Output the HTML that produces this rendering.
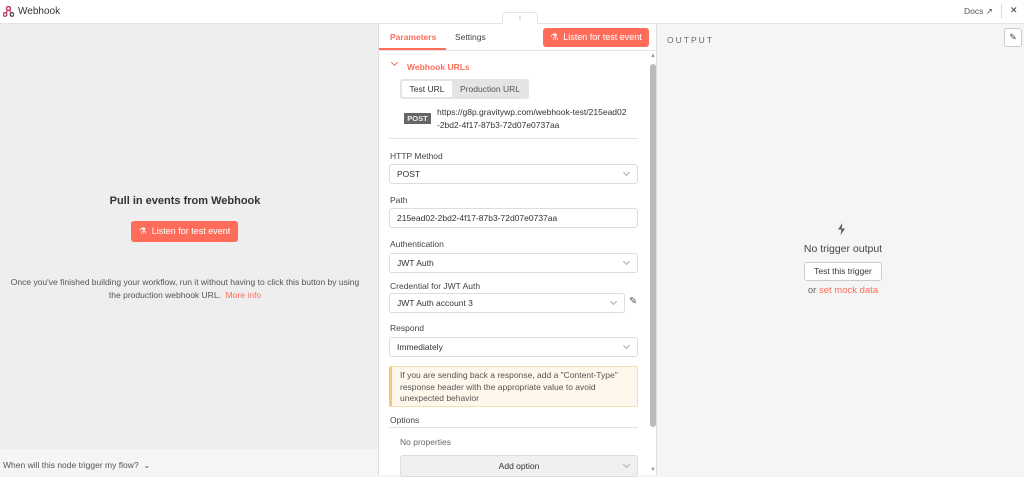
<!DOCTYPE html>
<html><head><style>
*{box-sizing:border-box;margin:0;padding:0}
body{width:1024px;height:475px;overflow:hidden;font-family:"Liberation Sans",sans-serif;background:#f5f5f5;position:relative;color:#333}
.abs{position:absolute}
.top{left:0;top:0;width:1024px;height:24px;background:#fff;border-bottom:1px solid #e4e4e4}
.left{left:0;top:24px;width:378px;height:451px;background:#eeeeee}
.right{left:657px;top:24px;width:367px;height:451px;background:#f5f5f5}
.mid{left:378px;top:24px;width:279px;height:451px;background:#fff;border-left:1px solid #ddd;border-right:1px solid #ddd}
.btn{background:#ff6d5a;color:#fff;border-radius:3px;font-size:9px;display:flex;align-items:center;justify-content:center}
.lbl{font-size:8.5px;color:#444;left:11px}
.inp{left:10px;width:249px;height:20px;border:1px solid #ddd;border-radius:3px;font-size:8.5px;color:#333;padding-left:7px;line-height:18px}
.chev{position:absolute;right:8px;top:5px;width:5px;height:5px;border-right:1px solid #aaa;border-bottom:1px solid #aaa;transform:rotate(45deg)}
</style></head><body>
<div class="abs top">
 <svg class="abs" style="left:3px;top:6px" width="11" height="11" viewBox="0 0 11 11"><circle cx="5.5" cy="2.5" r="2" fill="none" stroke="#c0365c" stroke-width="1.4"/><circle cx="2" cy="8.5" r="1.8" fill="none" stroke="#c0365c" stroke-width="1.4"/><circle cx="9" cy="8.5" r="1.8" fill="none" stroke="#555" stroke-width="1.4"/><path d="M4.8 4.2L2.8 7M6.5 4L8.3 7" stroke="#c0365c" stroke-width="1.2"/></svg>
 <div class="abs" style="left:18px;top:6px;font-size:10px;color:#333">Webhook</div>
 <div class="abs" style="left:964px;top:6px;font-size:8.5px;color:#555">Docs ↗</div>
 <div class="abs" style="left:1001px;top:4px;width:1px;height:15px;background:#ddd"></div>
 <div class="abs" style="left:1010px;top:5px;font-size:9px;color:#333">✕</div>
</div>
<div class="abs" style="left:502px;top:12px;width:36px;height:13px;background:#fff;border:1px solid #e4e4e4;border-bottom:none;border-radius:3px 3px 0 0;font-size:6px;color:#ccc;text-align:center;line-height:13px">⦀</div>
<div class="abs left">
 <div class="abs" style="left:0;top:171px;width:370px;text-align:center;font-size:11px;font-weight:bold;color:#333">Pull in events from Webhook</div>
 <div class="abs btn" style="left:131px;top:197px;width:107px;height:21px">⚗&nbsp; Listen for test event</div>
 <div class="abs" style="left:0;top:252px;width:370px;text-align:center;font-size:8.5px;color:#555;line-height:13px">Once you've finished building your workflow, run it without having to click this button by using<br>the production webhook URL. <span style="color:#ff6d5a">&nbsp;More info</span></div>
 <div class="abs" style="left:0;top:425px;width:378px;height:26px;background:#f5f5f5;font-size:8.5px;color:#555;padding:11px 0 0 3px">When will this node trigger my flow? &nbsp;⌄</div>
</div>
<div class="abs mid">
 <div class="abs" style="left:0;top:0;width:277px;height:27px;border-bottom:1px solid #e4e4e4"></div>
 <div class="abs" style="left:11px;top:8px;font-size:8.5px;color:#ff6d5a;font-weight:bold">Parameters</div>
 <div class="abs" style="left:0;top:24px;width:67px;height:2px;background:#ff6d5a"></div>
 <div class="abs" style="left:76px;top:8px;font-size:8.5px;color:#444">Settings</div>
 <div class="abs btn" style="left:164px;top:4px;width:106px;height:19px">⚗&nbsp; Listen for test event</div>
 <div class="abs" style="left:271px;top:40px;width:6px;height:363px;background:#bbb;border-radius:3px"></div>
 <div class="abs" style="left:271px;top:29px;font-size:6px;color:#999">▲</div>
 <div class="abs" style="left:271px;top:443px;font-size:6px;color:#999">▼</div>
 <div class="abs" style="left:13px;top:36px;width:5px;height:5px;border-right:1.5px solid #ff6d5a;border-bottom:1.5px solid #ff6d5a;transform:rotate(45deg)"></div>
 <div class="abs" style="left:28px;top:38px;font-size:8.5px;color:#ff6d5a;font-weight:bold">Webhook URLs</div>
 <div class="abs" style="left:21px;top:55px;width:129px;height:20px;background:#e4e4e4;border-radius:3px"></div>
 <div class="abs" style="left:23px;top:57px;width:50px;height:16px;background:#fff;border-radius:2px;font-size:8.5px;text-align:center;line-height:16px">Test URL</div>
 <div class="abs" style="left:81px;top:57px;font-size:8.5px;color:#555;line-height:16px">Production URL</div>
 <div class="abs" style="left:25px;top:89px;width:27px;height:11px;background:#666;color:#eee;font-size:7.5px;font-weight:bold;text-align:center;line-height:11px">POST</div>
 <div class="abs" style="left:58px;top:82px;font-size:8.5px;color:#333;line-height:13px">https://g8p.gravitywp.com/webhook-test/215ead02<br>-2bd2-4f17-87b3-72d07e0737aa</div>
 <div class="abs" style="left:10px;top:114px;width:249px;height:1px;background:#e4e4e4"></div>
 <div class="abs lbl" style="top:127px">HTTP Method</div>
 <div class="abs inp" style="top:140px">POST<span class="chev"></span></div>
 <div class="abs lbl" style="top:171px">Path</div>
 <div class="abs inp" style="top:184px">215ead02-2bd2-4f17-87b3-72d07e0737aa</div>
 <div class="abs lbl" style="top:215px">Authentication</div>
 <div class="abs inp" style="top:229px">JWT Auth<span class="chev"></span></div>
 <div class="abs lbl" style="top:257px">Credential for JWT Auth</div>
 <div class="abs inp" style="top:269px;width:236px">JWT Auth account 3<span class="chev"></span></div>
 <div class="abs" style="left:250px;top:272px;font-size:10px;color:#555">✎</div>
 <div class="abs lbl" style="top:299px">Respond</div>
 <div class="abs inp" style="top:313px">Immediately<span class="chev"></span></div>
 <div class="abs" style="left:10px;top:342px;width:249px;height:41px;background:#fef7ec;border:1px solid #f5dfb5;border-left:3px solid #f6c57a;border-radius:2px;font-size:8.5px;color:#555;line-height:11.5px;padding:3px 0 0 8px">If you are sending back a response, add a "Content-Type"<br>response header with the appropriate value to avoid<br>unexpected behavior</div>
 <div class="abs lbl" style="top:391px">Options</div>
 <div class="abs" style="left:10px;top:403px;width:249px;height:1px;background:#e4e4e4"></div>
 <div class="abs" style="left:21px;top:413px;font-size:8.5px;color:#666">No properties</div>
 <div class="abs" style="left:21px;top:431px;width:238px;height:22px;background:#f0f0f0;border:1px solid #ddd;border-radius:3px;font-size:8.5px;text-align:center;line-height:20px">Add option<span class="chev" style="top:6px"></span></div>
</div>
<div class="abs right">
 <div class="abs" style="left:10px;top:11px;font-size:8.5px;letter-spacing:2px;color:#666">OUTPUT</div>
 <div class="abs" style="left:347px;top:4px;width:18px;height:19px;background:#fff;border:1px solid #ccc;border-radius:3px;font-size:9px;text-align:center;line-height:17px;color:#444">✎</div>
 <svg class="abs" style="left:180px;top:199px" width="9" height="12" viewBox="0 0 9 12"><path d="M5.5 0L1 6.5H4.5L3.5 12L8 5.5H4.5Z" fill="#555"/></svg>
 <div class="abs" style="left:0;top:219px;width:372px;text-align:center;font-size:10.5px;color:#444">No trigger output</div>
 <div class="abs" style="left:147px;top:238px;width:78px;height:19px;background:#fff;border:1px solid #ccc;border-radius:3px;font-size:8.5px;text-align:center;line-height:17px;color:#333">Test this trigger</div>
 <div class="abs" style="left:0;top:261px;width:372px;text-align:center;font-size:9.5px;color:#666">or <span style="color:#ff6d5a">set mock data</span></div>
</div>
</body></html>
